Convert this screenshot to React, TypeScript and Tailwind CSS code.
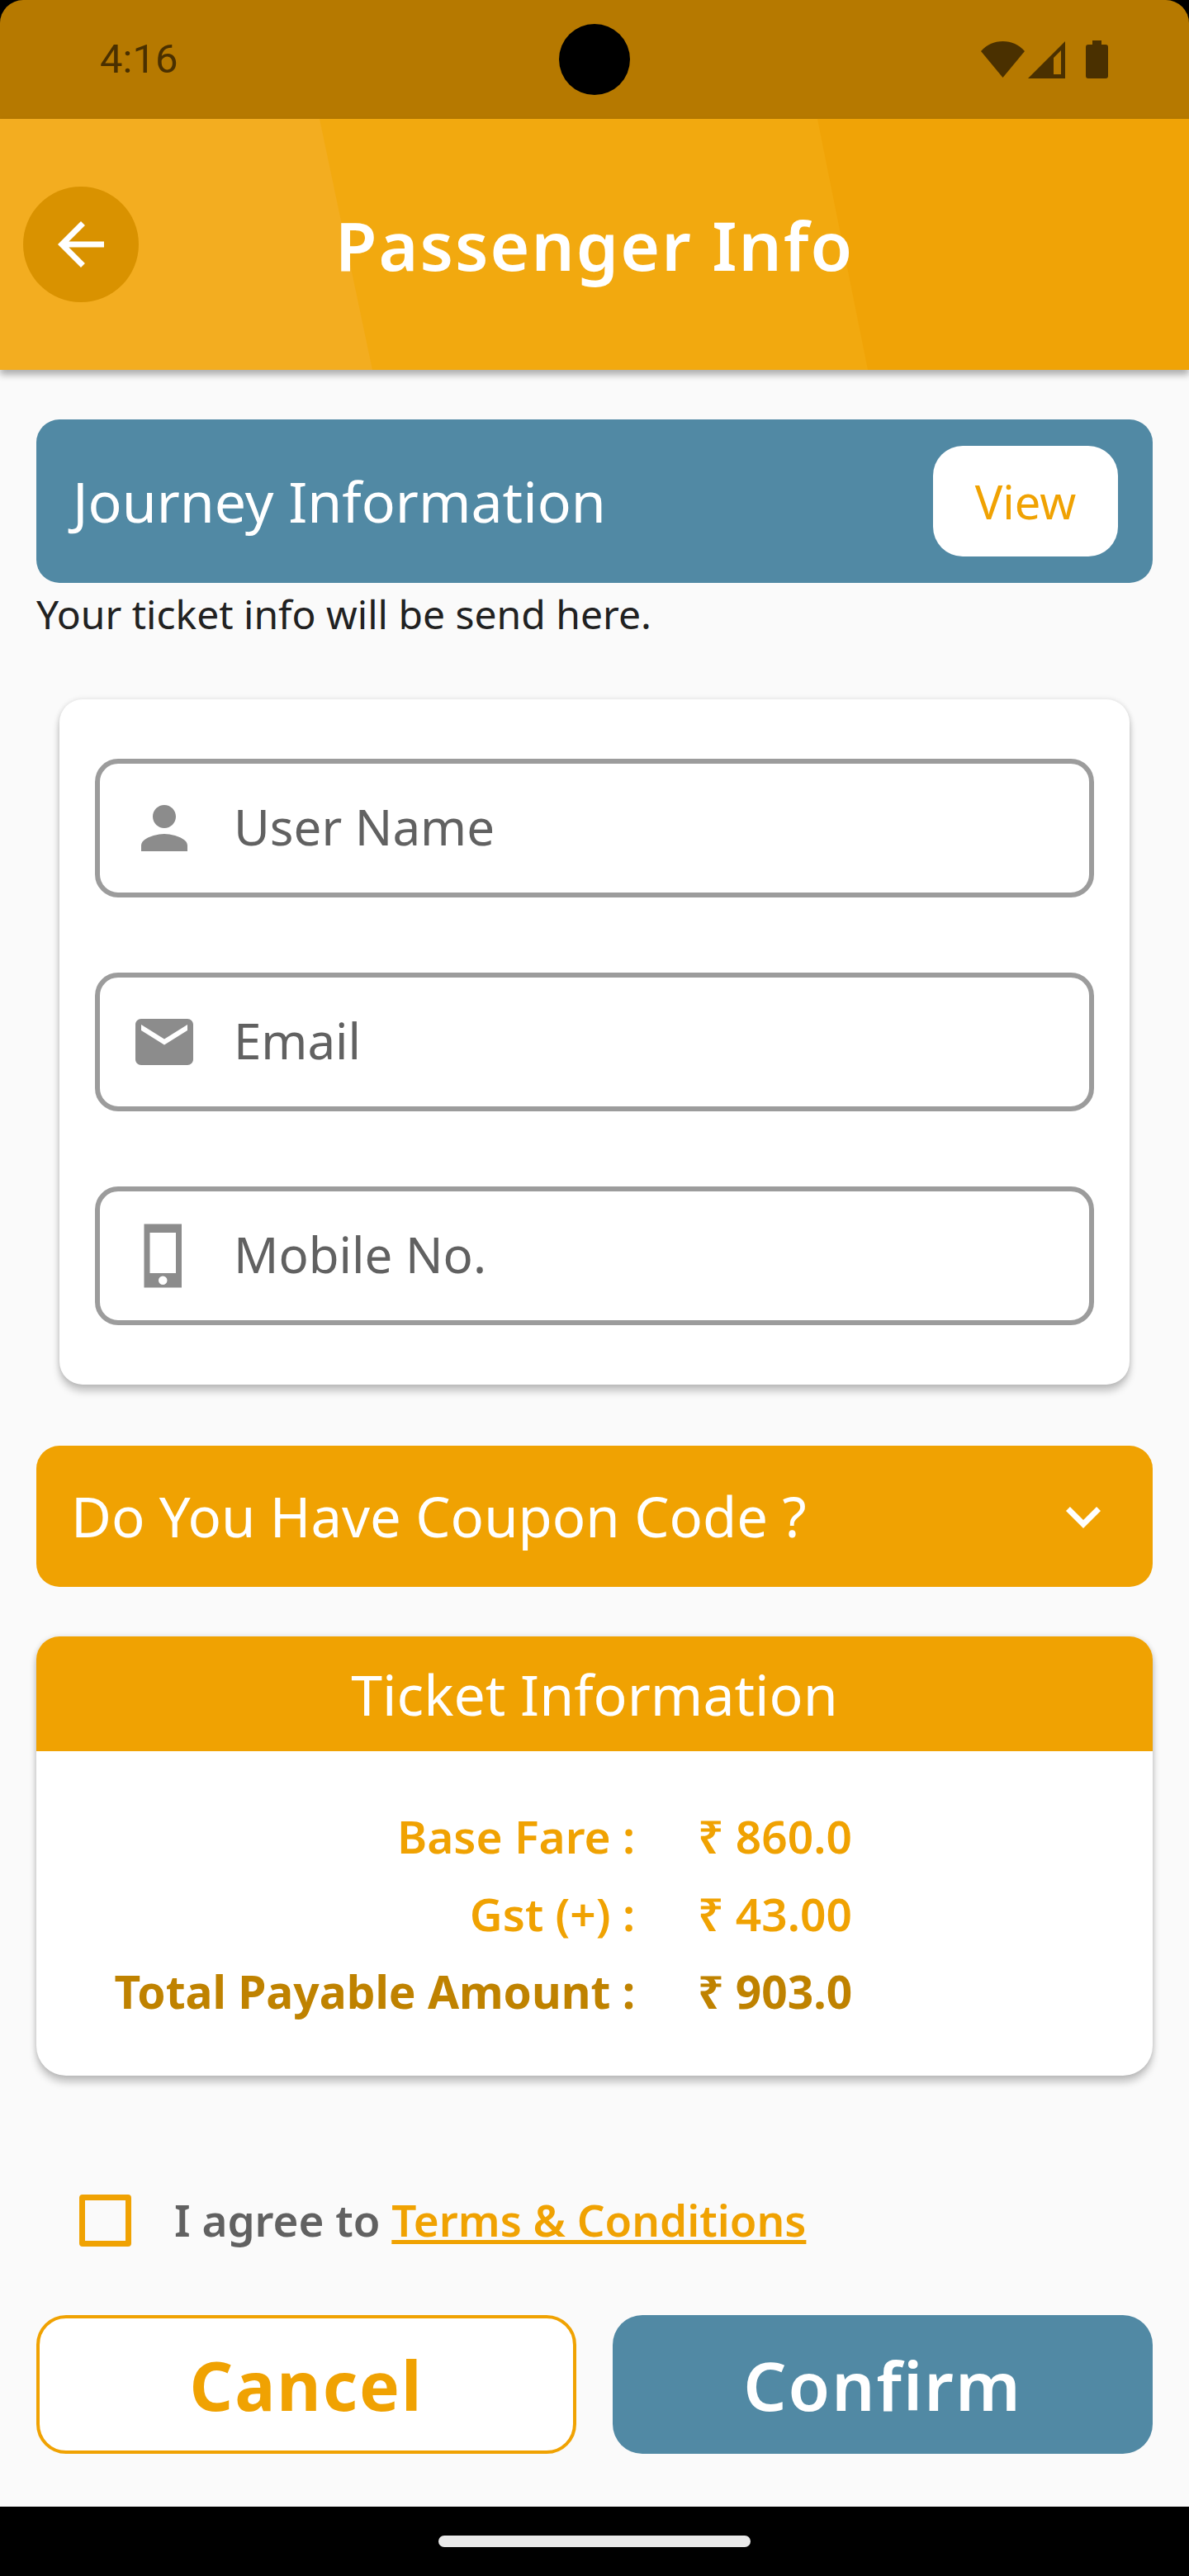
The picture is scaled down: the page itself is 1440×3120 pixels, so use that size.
import { useState } from "react";
import type { ReactNode } from "react";
import { MdArrowBack, MdEmail, MdExpandMore, MdPerson } from "react-icons/md";

const PhoneIcon = () => (
  <svg viewBox="0 0 24 24" className="size-[84px]" fill="currentColor">
    <path
      fillRule="evenodd"
      d="M5 1h13v22H5zM7 4v14h9V4zM11.5 19a1.5 1.5 0 1 0 0 3a1.5 1.5 0 1 0 0-3z"
    />
  </svg>
);

const StatusIcons = () => (
  <div className="flex items-center text-[#4a3000]">
    <svg viewBox="0 0 53 46" className="h-[46px] w-[53px]" fill="currentColor">
      <path d="M0 13C7 5 16 1 26.500 1S46 5 53 13L26.500 45z" />
    </svg>
    <svg viewBox="0 0 45 46" className="ml-1 h-[46px] w-[45px]" fill="currentColor">
      <path fillRule="evenodd" d="M45 1v45H0zM40 12l-9 9v20h9z" />
    </svg>
    <svg viewBox="0 0 27 46" className="ml-[25px] h-[46px] w-[27px]" fill="currentColor">
      <path d="M8 0h11v5h5a3 3 0 0 1 3 3v35a3 3 0 0 1-3 3H3a3 3 0 0 1-3-3V8a3 3 0 0 1 3-3h5z" />
    </svg>
  </div>
);

type FieldProps = {
  id: string;
  type: string;
  label: string;
  icon: ReactNode;
};

const Field = ({ id, type, label, icon }: FieldProps) => (
  <div className="flex h-[168px] items-center rounded-[28px] border-[6px] border-[#9c9c9c] pl-9">
    <label htmlFor={id} aria-label={label} className="shrink-0 text-[#8c8c8c]">
      {icon}
    </label>
    <input
      id={id}
      type={type}
      placeholder={label}
      className="ml-[42px] h-full min-w-0 flex-1 bg-transparent pr-8 pb-1 text-[60px] text-[#616161] outline-none placeholder:text-[#616161]"
    />
  </div>
);

const fares = [
  { label: "Base Fare :", value: "₹ 860.0", style: "font-semibold text-[#f0a202]" },
  { label: "Gst (+) :", value: "₹ 43.00", style: "font-semibold text-[#f0a202]" },
  { label: "Total Payable Amount :", value: "₹ 903.0", style: "font-bold text-[#bf8200]" },
];

export default function App() {
  const [agreed, setAgreed] = useState(false);
  const [couponOpen, setCouponOpen] = useState(false);

  return (
    <div className="flex min-h-screen flex-col bg-black font-['Noto_Sans',sans-serif]">
      <div className="relative flex h-36 items-center justify-between rounded-t-[28px] bg-[#b67900] pr-[98px] pl-[121px]">
        <span className="font-['Roboto',sans-serif] text-[49px] text-[#4a3000]">4:16</span>
        <div className="absolute top-[29px] left-1/2 size-[86px] -translate-x-1/2 rounded-full bg-black" />
        <StatusIcons />
      </div>

      <header className="relative z-10 flex h-[304px] items-center bg-[#f0a306] px-7 shadow-[0_6px_8px_rgba(0,0,0,0.3)]">
        <svg
          viewBox="0 0 1440 304"
          preserveAspectRatio="none"
          className="absolute inset-0 size-full"
          aria-hidden="true"
        >
          <path d="M0 0H990L1051 304H0z" fill="#f2a90f" />
          <path d="M0 0H387L451 304H0z" fill="#f3ad20" />
        </svg>
        <button
          aria-label="Back"
          className="relative flex size-[140px] shrink-0 items-center justify-center rounded-full bg-[#d99200] text-white"
        >
          <MdArrowBack className="size-[84px]" />
        </button>
        <h1 className="relative flex-1 pr-[140px] text-center text-[82px] font-semibold tracking-wide text-white">
          Passenger Info
        </h1>
      </header>

      <main className="flex-1 bg-[#fafafa] px-11 pt-[60px] pb-16">
        <section className="flex items-center justify-between rounded-[28px] bg-[#5189a4] py-8 pr-[42px] pl-11">
          <h2 className="text-[68px] leading-[80px] text-white">Journey Information</h2>
          <button className="h-[134px] w-56 rounded-[36px] bg-white text-[56px] text-[#f0a202]">
            View
          </button>
        </section>
        <p className="text-[48px] leading-[76px] text-[#212121]">
          Your ticket info will be send here.
        </p>

        <form className="mx-7 mt-[65px] flex flex-col gap-[91px] rounded-[28px] bg-white px-[43px] py-[72px] shadow-[0_8px_10px_rgba(0,0,0,0.22),0_0_6px_rgba(0,0,0,0.12)]">
          <Field id="name" type="text" label="User Name" icon={<MdPerson className="size-[84px]" />} />
          <Field id="email" type="email" label="Email" icon={<MdEmail className="size-[84px]" />} />
          <Field id="mobile" type="tel" label="Mobile No." icon={<PhoneIcon />} />
        </form>

        <button
          aria-expanded={couponOpen}
          onClick={() => setCouponOpen(!couponOpen)}
          className="mt-[74px] flex h-[171px] w-full items-center justify-between rounded-[28px] bg-[#f0a202] px-[42px] text-[67px] text-white"
        >
          Do You Have Coupon Code ?
          <MdExpandMore className="size-[84px]" />
        </button>

        <section className="mt-[60px] rounded-t-[28px] rounded-b-[36px] bg-white shadow-[0_8px_10px_rgba(0,0,0,0.22),0_0_6px_rgba(0,0,0,0.12)]">
          <h2 className="rounded-t-[28px] bg-[#f0a202] py-7 text-center text-[68px] leading-[83px] text-white">
            Ticket Information
          </h2>
          <div className="pt-14 pb-[55px]">
            <table className="w-full text-[55px] leading-[94px]">
              <tbody>
                {fares.map(({ label, value, style }) => (
                  <tr key={label} className={style}>
                    <th
                      scope="row"
                      className="w-[56%] pr-8 text-right [font-weight:inherit] whitespace-nowrap"
                    >
                      {label}
                    </th>
                    <td className="pl-11">{value}</td>
                  </tr>
                ))}
              </tbody>
            </table>
          </div>
        </section>

        <div className="mt-[133px] flex h-[84px] items-center pl-[52px] text-[53px] font-semibold text-[#616161]">
          <input
            id="terms"
            type="checkbox"
            checked={agreed}
            onChange={(e) => setAgreed(e.target.checked)}
            className="size-[63px] shrink-0 appearance-none rounded-[4px] border-[7px] border-[#f0a202] checked:bg-[#f0a202]"
          />
          <label htmlFor="terms" className="ml-[52px] whitespace-pre">
            I agree to{" "}
          </label>
          <a href="#terms" className="text-[#f0a202] underline decoration-[5px] underline-offset-4">
            Terms &amp; Conditions
          </a>
        </div>

        <div className="mt-[73px] grid grid-cols-2 gap-11 text-[82px] tracking-wide">
          <button className="h-[168px] rounded-[36px] border-4 border-[#f0a202] bg-white font-bold text-[#f0a202]">
            Cancel
          </button>
          <button className="h-[168px] rounded-[36px] bg-[#5189a4] font-semibold text-white">
            Confirm
          </button>
        </div>
      </main>

      <footer className="flex h-[84px] items-center justify-center">
        <div className="h-3.5 w-[378px] rounded-full bg-[#e9e9e9]" />
      </footer>
    </div>
  );
}
